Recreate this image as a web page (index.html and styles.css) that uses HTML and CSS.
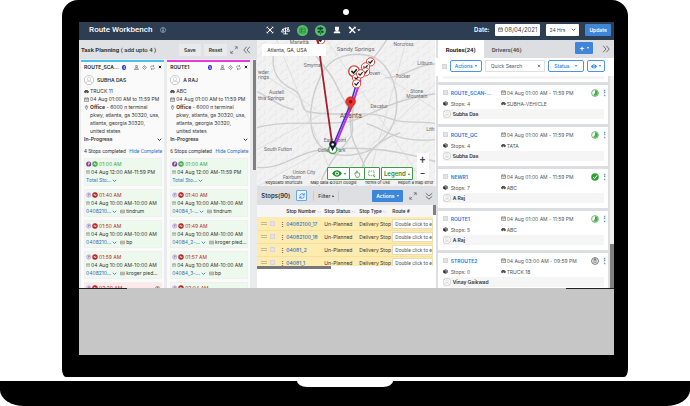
FILE: index.html
```html
<!DOCTYPE html>
<html lang="en">
<head>
<meta charset="utf-8">
<title>Route Workbench</title>
<link rel="stylesheet" href="styles.css">
</head>
<body>
<svg class="defs" aria-hidden="true">
  <symbol id="truck" viewBox="0 0 10 10"><path d="M0 7V5l1-1 1.500-2H7l1.500 2L10 5v2H8.500a1.300 1.300 0 0 1-2.600 0H4a1.300 1.300 0 0 1-2.600 0z" fill="currentColor"/></symbol>
  <symbol id="cal" viewBox="0 0 10 10"><path d="M1 2h8v7H1zM1 4h8M3 1v2M7 1v2M3 6h4" fill="none" stroke="currentColor"/></symbol>
  <symbol id="pin" viewBox="0 0 10 10"><path d="M5 9.500C4 7 2.500 5.500 2.500 3.500a2.500 2.500 0 0 1 5 0C7.500 5.500 6 7 5 9.500z" fill="none" stroke="currentColor"/><circle cx="5" cy="3.500" r="1" fill="currentColor"/></symbol>
  <symbol id="avatar" viewBox="0 0 20 20"><circle cx="10" cy="10" r="9.300" fill="#fff" stroke="#aaa" stroke-width="1.200"/><path d="M7 7c0-4 6-4 6 0 0 4-1 5-3 5S7 11 7 7zM4 16c1-4 3-3.500 6-3.500s5-.5 6 3.500" fill="none" stroke="#bbb" stroke-width="1.200"/></symbol>
  <symbol id="chev" viewBox="0 0 10 10"><path d="M1.500 3.500 5 7l3.500-3.500" fill="none" stroke="currentColor" stroke-width="1.700"/></symbol>
  <symbol id="person" viewBox="0 0 10 10"><path d="M3.500 1h3v4h-3zM1 9l2-3h4l2 3z" fill="none" stroke="currentColor"/></symbol>
  <symbol id="diamond" viewBox="0 0 10 10"><path d="M5 1 9 5 5 9 1 5zM5 3v2h1.500" fill="none" stroke="currentColor"/></symbol>
  <symbol id="sync" viewBox="0 0 10 10"><path d="M1.200 5V4a2 2 0 0 1 2-2H8M6.500.500 8 2 6.500 3.500M8.800 5v1a2 2 0 0 1-2 2H2M3.500 6.500 2 8l1.500 1.500" fill="none" stroke="currentColor"/></symbol>
  <symbol id="refresh" viewBox="0 0 10 10"><path d="M1.200 4.500A4 4 0 0 1 8.500 3M8.800.500V3.500H6M8.800 5.500A4 4 0 0 1 1.500 7M1.200 9.500V6.500H4" fill="none" stroke="currentColor" stroke-width="1.300"/></symbol>
  <symbol id="cross" viewBox="0 0 10 10"><path d="M2 2l6 6M8 2 2 8" stroke="currentColor" stroke-width="2.200"/></symbol>
  <symbol id="expand" viewBox="0 0 10 10"><path d="M6 4 9 1M6 1h3v3M4 6 1 9M1 6v3h3" fill="none" stroke="currentColor" stroke-width=".8"/></symbol>
  <symbol id="dbl" viewBox="0 0 10 10"><path d="M4.500 1 1 5l3.500 4M8.500 1 5 5l3.500 4" fill="none" stroke="currentColor"/></symbol>
  <symbol id="cube" viewBox="0 0 10 10"><path d="M5 1l4 2v4L5 9 1 7V3z" fill="#888" stroke="#333"/><path d="M1 3l4 2v4L1 7z" fill="#222"/></symbol>
  <symbol id="eye" viewBox="0 0 14 10"><path d="M0 5c4-6 10-6 14 0-4 6-10 6-14 0z" fill="currentColor"/><circle cx="7" cy="5" r="2.800" fill="#fff"/><circle cx="7" cy="5" r="1.600" fill="currentColor"/></symbol>
  <symbol id="box" viewBox="0 0 10 10"><path d="M1 2h8v6H1zM1 4h8M1 6h8" fill="#ddd" stroke="currentColor" stroke-width=".8"/></symbol>
  <symbol id="late" viewBox="0 0 20 10"><circle cx="4.500" cy="5" r="3.600" fill="#eadcf3" stroke="#b293c9"/><path d="M4 7V3h1.500v2H4" fill="none" stroke="#9a72b8"/><circle cx="15" cy="5" r="4.500" fill="#b3161b"/><path d="M13.500 7V3l3 4V3" fill="none" stroke="#fff"/></symbol>
  <symbol id="ontime" viewBox="0 0 20 10"><circle cx="4.500" cy="5" r="4.300" fill="#8a3a9c"/><path d="M4 7.500V3h2v2H4" fill="none" stroke="#fff"/><circle cx="15" cy="5" r="4.500" fill="#35a843"/><path d="M13.500 7V3l3 4V3" fill="none" stroke="#fff"/></symbol>
  <symbol id="half" viewBox="0 0 20 20"><circle cx="10" cy="10" r="8.500" fill="#fff" stroke="#45ad4b" stroke-width="2"/><path d="M10 3a7 7 0 0 1 0 14l-5-1 5-6z" fill="#45ad4b"/></symbol>
  <symbol id="done" viewBox="0 0 20 20"><circle cx="10" cy="10" r="9.500" fill="#2fa336"/><path d="M5 10l4 4 6-8" fill="none" stroke="#fff" stroke-width="2.500"/></symbol>
  <symbol id="timer" viewBox="0 0 20 20"><circle cx="10" cy="10" r="8.500" fill="#fff" stroke="#555" stroke-width="2"/><path d="M7 6v8h6V6z" fill="none" stroke="#555" stroke-width="1.500"/><path d="M10 2v9" stroke="#555" stroke-width="2"/></symbol>
  <symbol id="stop" viewBox="0 0 12 12"><circle cx="6" cy="6" r="5" fill="#fff" stroke="#e23b34" stroke-width="1.200"/><path d="M3.500 5.500 5.500 7.500 8.500 4" fill="none" stroke="#222" stroke-width="1.500"/></symbol>
</svg>

<main class="lid">
  <span class="camera"></span>
  <div class="screen">
    <div class="app">
      <header class="topbar">
        <div class="brand"><h1>Route Workbench</h1>
          <svg class="i6" viewBox="0 0 10 10"><circle cx="5" cy="5" r="4.300" fill="none" stroke="#cdd5dd" stroke-width=".8"/><path d="M5 4v4M5 2v1.200" stroke="#fff" stroke-width="1.300"/></svg>
        </div>
        <nav class="tools">
          <svg class="i8" viewBox="0 0 12 12"><path d="M2 2l8 8M10 2l-8 8" stroke="#fff" stroke-width="1.500"/><path d="M1 1h3L1 4zM11 1v3L8 1zM1 11V8l3 3zM11 11H8l3-3z" fill="#fff"/><circle cx="6" cy="6" r="2" fill="#fff"/></svg>
          <svg class="i9" viewBox="0 0 12 12"><path d="M1.500 4.500l9-2.500M6 2v8.500M3 10.500h6M0.600 8 2.500 4l2 4zM7.500 7l2-4 1.900 4z" fill="none" stroke="#fff" stroke-width="1.200"/></svg>
          <svg class="i11" viewBox="0 0 22 22"><circle cx="11" cy="11" r="11" fill="#55c267"/><path d="M5.500 6h11v10h-11zM5.500 9.300h11M5.500 12.600h11M9 6v10" fill="none" stroke="#1d6b35" stroke-width="1"/></svg>
          <svg class="i11" viewBox="0 0 22 22"><circle cx="11" cy="11" r="11" fill="#55c267"/><path d="M5 5h10l2 2-2 2H5zM17 11.500H7l-2 2 2 2h10zM10.200 3h1.600v16h-1.600z" fill="#153f38"/></svg>
          <svg class="i8" viewBox="0 0 12 12"><path d="M3 1h6v4a3 3 0 0 1-6 0zM1 11c0-3 2-3 5-3s5 0 5 3z" fill="#fff"/></svg>
          <svg class="tool-wide" viewBox="0 0 19 12"><path d="M2 10.500 10 2M2 2l8.500 8.500" stroke="#fff" stroke-width="2"/><path d="M.5 2 2 .5l2.500 2-2 2zM8 1h3.500v3.500z" fill="#fff"/><path d="M13.500 5h5L16 8z" fill="#fff"/></svg>
        </nav>
        <form class="filters">
          <label for="date">Date:</label>
          <span class="datebox"><svg class="i5"><use href="#cal"/></svg><input id="date" value="08/04/2021"></span>
          <span class="selectbox"><select aria-label="Range"><option>24 Hrs</option></select><svg class="i5"><use href="#chev"/></svg></span>
          <button type="button" class="solid">Update</button>
        </form>
      </header>

      <section class="planning">
        <div class="panel-head">
          <h2>Task Planning <span>( add upto 4 )</span></h2>
          <button class="flat">Save</button><button class="flat">Reset</button>
          <svg class="i8 dim"><use href="#expand"/></svg>
          <svg class="i8 dim"><use href="#dbl"/></svg>
        </div>
        <div class="lanes">
          <article class="lane cyan">
            <div class="lane-title"><h3>ROUTE_SCA...</h3><span class="dot">4</span><svg class="i5"><use href="#person"/></svg><svg class="i5"><use href="#diamond"/></svg><svg class="i5"><use href="#sync"/></svg><svg class="i4 dark"><use href="#cross"/></svg></div>
            <div class="who"><svg class="i10"><use href="#avatar"/></svg>SUBHA DAS</div>
            <ul class="facts">
              <li><svg class="i5"><use href="#truck"/></svg><span>TRUCK 11</span></li>
              <li><svg class="i5"><use href="#cal"/></svg><span>04 Aug 01:00 AM to 11:59 PM</span></li>
              <li><svg class="i5"><use href="#pin"/></svg><span><b>Office</b> - 6000 n terminal<br>pkwy, atlanta, ga 30320, usa,<br>atlanta, georgia 30320,<br>united states</span></li>
            </ul>
            <div class="state"><b>In-Progress</b><svg class="i5 dark"><use href="#chev"/></svg></div>
            <div class="sum"><span>4 Stops completed</span><a href="#">Hide Complete</a></div>
            <div class="task"><p class="ok"><svg class="pair"><use href="#ontime"/></svg>01:00 AM</p><p><svg class="i4"><use href="#cal"/></svg>04 Aug 12:00 AM-11:59 PM</p><p><a href="#">Total Sto...</a><svg class="i5 blue"><use href="#chev"/></svg></p></div>
            <div class="task"><p class="bad"><svg class="pair"><use href="#late"/></svg>01:40 AM</p><p><svg class="i4"><use href="#cal"/></svg>04 Aug 10:00 AM-10:00 AM</p><p><a href="#">0408210...</a><svg class="i5 blue"><use href="#chev"/></svg><svg class="i5 gap"><use href="#box"/></svg>tindrum</p></div>
            <div class="task"><p class="bad"><svg class="pair"><use href="#late"/></svg>01:50 AM</p><p><svg class="i4"><use href="#cal"/></svg>04 Aug 10:00 AM-10:00 AM</p><p><a href="#">0408210...</a><svg class="i5 blue"><use href="#chev"/></svg><svg class="i5 gap"><use href="#box"/></svg>bp</p></div>
            <div class="task"><p class="bad"><svg class="pair"><use href="#late"/></svg>01:59 AM</p><p><svg class="i4"><use href="#cal"/></svg>04 Aug 10:00 AM-10:00 AM</p><p><a href="#">0408210...</a><svg class="i5 blue"><use href="#chev"/></svg><svg class="i5 gap"><use href="#box"/></svg>kroger pied...</p></div>
            <div class="task pink"><p class="bad"><svg class="pair"><use href="#late"/></svg>02:20 AM<svg class="i5 end"><use href="#timer"/></svg></p></div>
          </article>
          <article class="lane magenta">
            <div class="lane-title"><h3>ROUTE1</h3><span class="dot">5</span><svg class="i5"><use href="#person"/></svg><svg class="i5"><use href="#diamond"/></svg><svg class="i5"><use href="#sync"/></svg><svg class="i4 dark"><use href="#cross"/></svg></div>
            <div class="who"><svg class="i10"><use href="#avatar"/></svg>A RAJ</div>
            <ul class="facts">
              <li><svg class="i5"><use href="#truck"/></svg><span>ABC</span></li>
              <li><svg class="i5"><use href="#cal"/></svg><span>04 Aug 01:00 AM to 11:59 PM</span></li>
              <li><svg class="i5"><use href="#pin"/></svg><span><b>Office</b> - 6000 n terminal<br>pkwy, atlanta, ga 30320, usa,<br>atlanta, georgia 30320,<br>united states</span></li>
            </ul>
            <div class="state"><b>In-Progress</b><svg class="i5 dark"><use href="#chev"/></svg></div>
            <div class="sum"><span>6 Stops completed</span><a href="#">Hide Complete</a></div>
            <div class="task"><p class="ok"><svg class="pair"><use href="#ontime"/></svg>01:00 AM</p><p><svg class="i4"><use href="#cal"/></svg>04 Aug 12:00 AM-11:59 PM</p><p><a href="#">Total Sto...</a><svg class="i5 blue"><use href="#chev"/></svg></p></div>
            <div class="task"><p class="bad"><svg class="pair"><use href="#late"/></svg>01:40 AM</p><p><svg class="i4"><use href="#cal"/></svg>04 Aug 10:00 AM-10:00 AM</p><p><a href="#">04084_1-...</a><svg class="i5 blue"><use href="#chev"/></svg><svg class="i5 gap"><use href="#box"/></svg>tindrum</p></div>
            <div class="task"><p class="bad"><svg class="pair"><use href="#late"/></svg>01:49 AM</p><p><svg class="i4"><use href="#cal"/></svg>04 Aug 10:00 AM-10:00 AM</p><p><a href="#">04084_2-...</a><svg class="i5 blue"><use href="#chev"/></svg><svg class="i5 gap"><use href="#box"/></svg>kroger pied...</p></div>
            <div class="task"><p class="bad"><svg class="pair"><use href="#late"/></svg>01:57 AM</p><p><svg class="i4"><use href="#cal"/></svg>04 Aug 10:00 AM-10:00 AM</p><p><a href="#">04084_3-...</a><svg class="i5 blue"><use href="#chev"/></svg><svg class="i5 gap"><use href="#box"/></svg>bp</p></div>
            <div class="task"><p class="bad"><svg class="pair"><use href="#late"/></svg>02:04 AM</p></div>
          </article>
          <div class="track"><span class="thumb tall"></span></div>
        </div>
      </section>

      <section class="centre">
        <div class="map">
          <svg class="map-art" viewBox="0 0 179 147" preserveAspectRatio="xMidYMid slice">
            <defs><pattern id="hatch" width="11" height="9" patternUnits="userSpaceOnUse"><path d="M1 8l4-5M6 4l3-3M7 9l2-2" stroke="#dcdddd" stroke-width=".7"/></pattern></defs>
            <rect width="179" height="147" fill="#f2f2f2"/><rect width="179" height="147" fill="url(#hatch)"/>
            <g fill="none" stroke="#cccdce" stroke-width="1.400">
              <path d="M17 12c-4 20 6 32 20 38 10 5 6 20 14 22 30 6 60-2 80 6 20 8 30 2 48 6"/>
              <path d="M0 88c30-8 60-2 92-6 20-4 40-22 87-28"/>
              <path d="M50 0c8 20 24 30 30 46 6 14 14 20 14 40s14 30 20 61"/>
              <path d="M130 0c-10 18-24 26-28 44-4 14-8 30-6 44s-20 22-34 59"/>
              <path d="M64 36c10-22 34-24 50-20 14 4 24 22 26 40 2 22-4 36-20 50-10 10-40 14-52 4-16-10-20-40-4-74z"/>
              <path d="M179 24c-20 0-30 14-50 14M110 84c20 6 30 20 69 16M0 128c28 2 40-16 66-18s60-4 113 12M100 147c6-28 14-44 44-54M0 52c14 6 20 14 37 18"/>
            </g>
            <g fill="none" stroke="#dadbdb" stroke-width=".8"><path d="M0 30 60 70M20 0l60 147M150 0l-40 147M179 44 90 130M0 110l110-60M70 0l100 147M0 147l90-50M120 30l59 40"/></g>
            <g class="labels">
              <text x="33" y="4">Marietta</text><text x="80" y="11" class="mid">Sandy Springs</text><text x="137" y="6">Norcross</text><text x="161" y="25">Lilburn</text><text x="47" y="27">Smyrna</text><text x="1" y="34">wder</text><text x="1" y="39">rings</text><text x="139" y="38">Tucker</text><text x="113" y="35">oven</text><text x="12" y="54">Austell</text><text x="1" y="60">thia Springs</text><text x="154" y="53">Stone</text><text x="150" y="58">Mountain</text><text x="114" y="68">Decatur</text><text x="170" y="91">Lith</text><text x="67" y="102">East Point</text><text x="7" y="111">South Fulton</text><text x="61" y="112">College Park</text><text x="36" y="135">Union City</text><text x="26" y="140">Fairburn</text>
              <text x="83" y="78" class="city">Atlanta</text>
            </g>
            <use href="#stop" x="59" y="-5" width="10" height="10"/>
            <path d="M61 0 76 108" stroke="#a3202c" stroke-width="1.800"/>
            <path d="M76 107 94 64l7-24" fill="none" stroke="#3c2bc8" stroke-width="1.500"/><path d="M78 107 96 64l8-24" fill="none" stroke="#c22bea" stroke-width="2"/>
            <circle cx="76" cy="110" r="4" fill="#fff" stroke="#4cab61" stroke-width="1.500"/><path d="M76 112c-1-4-3.500-5-3.500-7a3.500 3.500 0 0 1 7 0c0 2-2.500 3-3.500 7z" fill="#10212c"/><circle cx="76" cy="105" r="1.200" fill="#fff"/>
            <path d="M94 72c-1-6-5-7-5-10a5 5 0 0 1 10 0c0 3-4 4-5 10z" fill="#e4342b" stroke="#b32018" stroke-width=".5"/><circle cx="94" cy="62" r="1.700" fill="#8e120d"/>
            <use href="#stop" x="109" y="17" width="10" height="10"/><use href="#stop" x="104" y="22" width="10" height="10"/><use href="#stop" x="104" y="27" width="10" height="10"/><use href="#stop" x="91" y="25" width="13" height="13"/><use href="#stop" x="95" y="33" width="10" height="10"/><use href="#stop" x="99" y="29" width="10" height="10"/><use href="#stop" x="95" y="39" width="10" height="10"/>
          </svg>
          <input class="place" aria-label="Place" value="Atlanta, GA, USA">
          <div class="zoom"><button>+</button><button>−</button></div>
          <div class="map-tools">
            <button aria-label="Visibility"><svg class="eye"><use href="#eye"/></svg><i class="caret"></i></button>
            <button aria-label="Pan"><svg class="i8" viewBox="0 0 12 12"><path d="M3 7V4l2 1V1.500h1.500V4L10 5v3l-2 3H5z" fill="none" stroke="currentColor"/></svg></button>
            <button aria-label="Select area"><svg class="i8" viewBox="0 0 12 12"><path d="M1 1.500h8v7H1z" fill="none" stroke="currentColor" stroke-dasharray="2 1"/><path d="M8 8l3 1-1.500 2z" fill="currentColor"/></svg></button>
            <button class="legend">Legend<i class="caret up"></i></button>
          </div>
          <div class="credits"><span>Keyboard shortcuts</span><span>Map data ©2021 Google</span><span>Terms of Use</span><span>Report a map error</span></div>
        </div>
        <div class="stops-head">
          <h2>Stops(90)</h2>
          <button class="icon-btn" aria-label="Refresh"><svg class="i6"><use href="#refresh"/></svg></button>
          <button class="filter">Filter<i class="caret up"></i></button>
          <button class="solid push">Actions<i class="caret"></i></button>
          <svg class="i8 dim"><use href="#expand"/></svg>
          <svg class="i8 dim down"><use href="#dbl"/></svg>
        </div>
        <div class="stops">
          <div class="table-wrap">
            <table>
              <colgroup><col class="c-grip"><col class="c-check"><col class="c-menu"><col class="c-num"><col class="c-status"><col class="c-type"><col></colgroup>
              <thead><tr><th></th><th></th><th></th><th>Stop Number <i>↑↓</i></th><th>Stop Status <i>↑↓</i></th><th>Stop Type <i>↑↓</i></th><th>Route #</th></tr></thead>
              <tbody>
                <tr><td><span class="grip"></span></td><td><input type="checkbox" aria-label="04082100_17"></td><td class="dots">⋮</td><td><a href="#">04082100_17</a></td><td>Un-Planned</td><td>Delivery Stop</td><td><input class="cell" aria-label="Route" placeholder="Double click to enter"></td></tr>
                <tr><td><span class="grip"></span></td><td><input type="checkbox" aria-label="04082100_18"></td><td class="dots">⋮</td><td><a href="#">04082100_18</a></td><td>Un-Planned</td><td>Delivery Stop</td><td><input class="cell" aria-label="Route" placeholder="Double click to enter"></td></tr>
                <tr><td><span class="grip"></span></td><td><input type="checkbox" aria-label="04081_2"></td><td class="dots">⋮</td><td><a href="#">04081_2</a></td><td>Un-Planned</td><td>Delivery Stop</td><td><input class="cell" aria-label="Route" placeholder="Double click to enter"></td></tr>
                <tr><td><span class="grip"></span></td><td><input type="checkbox" aria-label="04081_1"></td><td class="dots">⋮</td><td><a href="#">04081_1</a></td><td>Un-Planned</td><td>Delivery Stop</td><td><input class="cell" aria-label="Route" placeholder="Double click to enter"></td></tr>
              </tbody>
            </table>
          </div>
          <div class="track"><span class="thumb short"></span></div>
          <div class="hbar"></div>
        </div>
      </section>

      <section class="routes">
        <div class="tabs">
          <a class="tab active" href="#">Routes(24)</a><a class="tab" href="#">Drivers(46)</a>
          <button class="solid push add">+<i class="caret"></i></button>
          <svg class="i8 dim flip"><use href="#dbl"/></svg>
        </div>
        <div class="bar">
          <input type="checkbox" aria-label="Select all">
          <button class="line">Actions<i class="caret"></i></button>
          <span class="search"><input placeholder="Quick Search" aria-label="Quick Search"><svg class="i4"><use href="#cross"/></svg></span>
          <button class="line status">Status<i class="caret"></i></button>
          <button class="line view" aria-label="View"><svg class="eye small"><use href="#eye"/></svg><i class="caret"></i></button>
        </div>
        <div class="list">
          <div class="cards">
            <article class="card stub"><div class="driver"></div></article>
            <article class="card"><div class="row"><input type="checkbox" aria-label="ROUTE_SCAN"><a href="#">ROUTE_SCAN-...</a><span><svg class="i5"><use href="#cal"/></svg>04 Aug 01:00 AM - 11:59 PM</span><svg class="i8"><use href="#half"/></svg><b class="more">⋮</b></div><div class="row"><svg class="i5"><use href="#cube"/></svg><em>Stops: 4</em><span><svg class="i5"><use href="#truck"/></svg>SUBHA-VEHICLE</span></div><div class="driver"><svg class="i8"><use href="#avatar"/></svg>Subha Das</div></article>
            <article class="card"><div class="row"><input type="checkbox" aria-label="ROUTE_QC"><a href="#">ROUTE_QC</a><span><svg class="i5"><use href="#cal"/></svg>04 Aug 01:00 AM - 11:59 PM</span><svg class="i8"><use href="#half"/></svg><b class="more">⋮</b></div><div class="row"><svg class="i5"><use href="#cube"/></svg><em>Stops: 4</em><span><svg class="i5"><use href="#truck"/></svg>TATA</span></div><div class="driver"><svg class="i8"><use href="#avatar"/></svg>Subha Das</div></article>
            <article class="card"><div class="row"><input type="checkbox" aria-label="NEWR1"><a href="#">NEWR1</a><span><svg class="i5"><use href="#cal"/></svg>04 Aug 01:00 AM - 11:59 PM</span><svg class="i8"><use href="#done"/></svg><b class="more">⋮</b></div><div class="row"><svg class="i5"><use href="#cube"/></svg><em>Stops: 7</em><span><svg class="i5"><use href="#truck"/></svg>ABC</span></div><div class="driver"><svg class="i8"><use href="#avatar"/></svg>A Raj</div></article>
            <article class="card"><div class="row"><input type="checkbox" aria-label="ROUTE1"><a href="#">ROUTE1</a><span><svg class="i5"><use href="#cal"/></svg>04 Aug 01:00 AM - 11:59 PM</span><svg class="i8"><use href="#half"/></svg><b class="more">⋮</b></div><div class="row"><svg class="i5"><use href="#cube"/></svg><em>Stops: 5</em><span><svg class="i5"><use href="#truck"/></svg>ABC</span></div><div class="driver"><svg class="i8"><use href="#avatar"/></svg>A Raj</div></article>
            <article class="card"><div class="row"><input type="checkbox" aria-label="STROUTE2"><a href="#">STROUTE2</a><span><svg class="i5"><use href="#cal"/></svg>04 Aug 03:00 AM - 09:59 PM</span><svg class="i8"><use href="#timer"/></svg><b class="more">⋮</b></div><div class="row"><svg class="i5"><use href="#cube"/></svg><em>Stops: 0</em><span><svg class="i5"><use href="#truck"/></svg>TRUCK 18</span></div><div class="driver"><svg class="i8"><use href="#avatar"/></svg>Vinay Gaikwad</div></article>
          </div>
          <div class="track end"><span class="thumb last"></span></div>
        </div>
      </section>
    </div>
    <div class="blank"></div>
  </div>
</main>
<div class="base"><span class="notch"></span></div>
</body>
</html>
```
FILE: styles.css
```css
* { box-sizing: border-box; }
body {
  margin: 0;
  height: 100vh;
  display: flex;
  flex-direction: column;
  align-items: center;
  gap: 4px;
  background: #fff;
  color: #333;
  font: 5px/8px Inter, Roboto, sans-serif;
  overflow: hidden;
}
h1, h2, h3, p, ul { margin: 0; padding: 0; font-size: inherit; }
ul { list-style: none; }
a { color: #2a74c4; text-decoration: none; }
svg { flex: none; display: block; }
button, input, select { font: inherit; color: inherit; margin: 0; padding: 0; border: 0; min-width: 0; }
button { display: inline-flex; align-items: center; justify-content: center; gap: 2px; background: none; }
input[type="checkbox"] { appearance: none; width: 5px; height: 5px; background: #e3e3e6; border: 1px solid #d5d5da; display: block; flex: none; }
.defs { position: absolute; width: 0; height: 0; }
.i4 { width: 4px; height: 4px; }
.i5 { width: 5px; height: 5px; }
.i6 { width: 6px; height: 6px; }
.i8 { width: 8px; height: 8px; }
.i9 { width: 9px; height: 9px; }
.i10 { width: 10px; height: 10px; }
.i11 { width: 11px; height: 11px; }
.dim { color: #555; }
.dark { color: #111; }
.blue { color: #2a74c4; }
.down { transform: rotate(-90deg); }
.flip { transform: rotate(180deg); }
.caret { border: 1px solid transparent; border-top: 2px solid currentColor; border-bottom: 0; }
.caret.up { border-top: 0; border-bottom: 2px solid currentColor; }
.push { margin-left: auto; }

/* laptop */
.lid {
  width: 82%;
  flex: 1;
  min-height: 0;
  display: flex;
  flex-direction: column;
  padding: 0 14px 22px 17px;
  background: #000;
  border-radius: 16px 16px 4px 4px / 16px 16px 8px 8px;
}
.camera { width: 6px; height: 6px; margin: 9px auto 7px; border-radius: 50%; background: #fff; flex: none; }
.screen { flex: 1; min-height: 0; display: grid; grid-template-rows: minmax(0, 4fr) minmax(0, 1fr); }
.blank { background: linear-gradient(90deg, #222 9%, #c6c6c6 9%, #c6c6c6 91%, #222 91%) top / 100% 1px no-repeat #c6c6c6; }
.base {
  width: 100%;
  height: 25px;
  flex: none;
  background: #000;
  border-radius: 0 0 24px 24px / 0 0 16px 16px;
}
.notch { display: block; width: 14%; height: 6px; margin: 0 auto; background: #fff; border-radius: 0 0 10px 10px / 0 0 6px 6px; }

/* frame */
.app { display: grid; grid-template: 18px minmax(0, 1fr) / repeat(3, minmax(0, 1fr)); background: #fff; overflow: hidden; }
.topbar {
  grid-column: 1 / -1;
  display: grid;
  grid-template-columns: repeat(3, minmax(0, 1fr));
  align-items: center;
  background: #2d3e52;
  color: #fff;
}
.brand { display: flex; align-items: center; gap: 8px; padding: 0 0 3px 10px; }
.brand h1 { font: 500 8px/10px Roboto, sans-serif; white-space: nowrap; }
.tools { display: flex; align-items: center; gap: 7px; padding: 0 0 2px 9px; }
.tool-wide { width: 13px; height: 8px; }
.filters { display: flex; align-items: center; justify-content: flex-end; gap: 6px; padding: 0 3px 3px 0; }
.filters label { font-size: 6px; font-weight: 600; }
.datebox, .selectbox { display: flex; align-items: center; gap: 1px; height: 12px; padding: 0 3px; background: #fff; color: #444; border-radius: 1px; }
.datebox { width: 45px; }
.datebox input { width: 100%; font-size: 6px; background: none; }
.selectbox { width: 33px; }
.selectbox select { appearance: none; width: 100%; background: none; }
.solid { height: 12px; padding: 0 4px; background: #3d86d8; color: #fff; border-radius: 1px; font-weight: 600; }

/* planning */
.planning, .routes, .centre { display: flex; flex-direction: column; min-height: 0; min-width: 0; }
.planning { background: #eaebec; }
.panel-head { display: flex; align-items: center; gap: 3px; height: 19px; flex: none; padding: 0 6px 0 2px; background: #dfe1e4; }
.panel-head h2 { flex: 1; font: 700 6px/8px Roboto, sans-serif; white-space: nowrap; }
.panel-head h2 span { font-weight: 500; }
.panel-head .dim + .dim { margin-left: 2px; }
.flat { height: 12px; padding: 0 5px; background: #e9eaec; font-weight: 600; }
.lanes { flex: 1; min-height: 0; display: grid; grid-template-columns: minmax(0, 1fr) minmax(0, 1fr) 3px; gap: 3px; padding: 1px 1px 0 2px; }
.lane { display: flex; flex-direction: column; min-height: 0; overflow: hidden; background: #fafafa; border-top: 2px solid #48c4ec; padding: 0 2px 0 3px; }
.lane.magenta { border-top-color: #e53be0; }
.lane > * { flex: none; }
.lane-title { display: flex; align-items: center; gap: 3px; height: 10px; color: #444; }
.lane-title h3 { width: 38px; font-weight: 600; white-space: nowrap; color: #222; }
.dot { width: 5px; height: 5px; margin-right: 5px; border-radius: 50%; background: #2128cf; color: #fff; font-size: 4px; line-height: 5px; text-align: center; }
.who { display: flex; align-items: center; gap: 3px; height: 15px; font-weight: 600; }
.facts { color: #555; white-space: nowrap; }
.facts li { display: flex; gap: 1px; }
.facts svg { margin-top: 2px; }
.facts span { color: #333; }
.state { display: flex; justify-content: space-between; align-items: center; height: 8px; }
.state b { font-weight: 600; }
.sum { display: flex; justify-content: space-between; height: 15px; font: 5px/16px Roboto, sans-serif; white-space: nowrap; }
.task { min-height: 28px; margin-bottom: 3px; padding: 1px; background: #edf9ec; border: 1px solid #eef1ee; white-space: nowrap; overflow: hidden; }
.task.pink { background: #fde9e9; }
.task p { display: flex; align-items: center; gap: 1px; height: 8px; }
.task svg { color: #777; }
.task .blue { color: #2a74c4; }
.task .gap { margin-left: 2px; }
.task .end { margin-left: auto; }
.pair { width: 12px; height: 6px; }
.ok { color: #3aa845; }
.bad { color: #b5282c; }
.track { display: flex; }
.thumb { display: block; width: 100%; background: #808080; }
.thumb.tall { height: 48%; }
.thumb.short { height: 16%; }
.thumb.last { height: 21%; }

/* map */
.map { position: relative; flex: 1; min-height: 0; overflow: hidden; }
.map-art { width: 100%; height: 100%; }
.labels { font: 5px Roboto, sans-serif; fill: #6c6c6c; }
.labels .mid { font-size: 6px; }
.labels .city { font-size: 7px; fill: #555; }
.place { position: absolute; left: 5px; top: 4px; width: 64px; height: 12px; padding-left: 5px; background: #fff; }
.zoom { position: absolute; right: 7px; bottom: 5px; display: grid; width: 12px; background: #fff; font: 500 10px/14px Roboto, sans-serif; color: #444; }
.map-tools { position: absolute; right: 23px; bottom: 6px; display: flex; height: 13px; color: #2b8a34; }
.map-tools button { background: #fff; border: 1px solid #3c9a45; border-radius: 1px; padding: 0 3px; margin-left: -1px; }
.map-tools .legend { margin-left: 1px; font-size: 6px; font-weight: 600; padding: 0 2px; }
.eye { width: 10px; height: 7px; }
.eye.small { width: 6px; height: 5px; }
.map-tools .eye { margin-left: 1px; }
.credits { position: absolute; right: 2px; bottom: 1px; display: flex; gap: 8px; font: 4px/5px Inter, Roboto, sans-serif; color: #111; white-space: nowrap; background: #f2f2f2; }

/* stops */
.stops-head { display: flex; align-items: center; gap: 6px; height: 19px; flex: none; padding: 0 3px 0 4px; background: #dddfe2; }
.stops-head h2 { font-size: 6px; font-weight: 600; }
.stops-head .dim + .dim { margin-left: 2px; }
.icon-btn { width: 11px; height: 11px; background: #eaf3fd; border: 1px solid #68a6ea; border-radius: 1px; color: #2a7de1; }
.filter { height: 10px; padding: 0 4px; border: 1px solid #c9cbd0; border-width: 0 1px; font-weight: 500; }
.stops { display: grid; grid-template: auto 3px / minmax(0, 1fr) 3px; height: 83px; align-content: start; flex: none; }
.table-wrap { height: 61px; overflow: hidden; }
table { width: 100%; table-layout: fixed; border-collapse: collapse; white-space: nowrap; }
.c-grip { width: 13px; }
.c-check { width: 10px; }
.c-menu { width: 6px; }
.c-num { width: 38px; }
.c-status { width: 35px; }
.c-type { width: 33px; }
th, td { padding: 0; text-align: left; font-weight: 400; overflow: hidden; }
th { height: 12px; font: 500 5px/8px Roboto, sans-serif; background: #f6f6f6; }
th i { font-style: normal; font-size: 4px; color: #888; }
td { height: 13px; background: #fdebb0; border-bottom: 1px solid #f7e09a; }
td a { font-weight: 500; }
.grip { display: block; width: 6px; height: 3px; margin-left: 4px; border: 1px solid #c6b98f; border-width: 1px 0; }
.dots { font-weight: 700; }
.cell { width: 100%; height: 10px; display: block; padding-left: 2px; background: #fff; border: 1px solid #e6dcb9; font: 5px/8px Roboto, sans-serif; }
::placeholder { color: #555; opacity: 1; }
.hbar { width: 42%; background: #777; }

/* routes */
.routes { background: #dcdee1; }
.tabs { display: flex; align-items: center; height: 18px; flex: none; padding: 0 4px 0 2px; background: #dcdee1; }
.tab { align-self: stretch; display: flex; align-items: center; padding: 1px 8px 0; color: #444; font: 500 6px/8px Roboto, sans-serif; }
.tab.active { background: #fff; color: #222; font-weight: 700; }
.add { width: 18px; font-size: 8px; margin-right: 9px; margin-bottom: 3px; }
.bar { display: flex; align-items: center; gap: 3px; height: 18px; flex: none; padding: 0 9px 2px 6px; background: #fff; }
.line { height: 12px; padding: 0 4px; border: 1px solid #4c94e8; border-radius: 2px; background: #fff; color: #2a7de1; font-weight: 500; }
.status { width: 36px; gap: 6px; }
.view { padding: 0 3px; }
.search { flex: 1; display: flex; align-items: center; height: 12px; padding: 0 3px 0 5px; border: 1px solid #dedfe3; color: #777; }
.search input { width: 100%; background: none; }
.list { flex: 1; min-height: 0; display: flex; justify-content: space-between; gap: 1px; }
.cards { flex: 1; min-width: 0; min-height: 0; overflow: hidden; display: flex; flex-direction: column; gap: 3px; padding: 0 1px 0 2px; }
.card { flex: none; height: 39px; padding: 2px 4px 0 5px; background: #fff; }
.card.stub { height: 6px; padding-top: 0; }
.card.stub .driver { height: 3px; }
.row { display: grid; grid-template-columns: 5px 47px minmax(0, 1fr) 8px 2px; column-gap: 3px; align-items: center; height: 11px; white-space: nowrap; }
.row a { color: #1c78e0; font-weight: 600; overflow: hidden; }
.row em { font-style: normal; color: #555; }
.row span { display: flex; align-items: center; gap: 1px; color: #555; }
.more { color: #2a7de1; font-size: 7px; margin-left: -1px; }
.driver { display: flex; align-items: center; gap: 2px; height: 10px; background: #f5f5f6; color: #333; font-weight: 600; }
.track.end { width: 4px; align-items: flex-end; background: #f0f0f0; }
```
